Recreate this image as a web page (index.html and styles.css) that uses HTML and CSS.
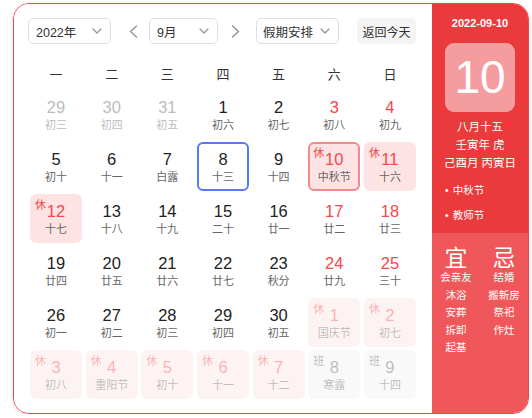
FILE: index.html
```html
<!DOCTYPE html>
<html lang="zh">
<head>
<meta charset="utf-8">
<title>万年历</title>
<link rel="stylesheet" href="styles.css">
</head>
<body>
<div class="cal">
  <div class="main">
    <div class="toolbar">
      <div class="sel-box w-year"><span>2022年</span><svg class="chev" width="10" height="6" viewBox="0 0 10 6"><path d="M1 1L5 5L9 1"/></svg></div>
      <svg class="arrow a-left" width="9" height="13" viewBox="0 0 9 13"><path d="M7.5 1L1.5 6.5L7.5 12"/></svg>
      <div class="sel-box w-month"><span>9月</span><svg class="chev" width="10" height="6" viewBox="0 0 10 6"><path d="M1 1L5 5L9 1"/></svg></div>
      <svg class="arrow a-right" width="9" height="13" viewBox="0 0 9 13"><path d="M1.5 1L7.5 6.5L1.5 12"/></svg>
      <div class="sel-box w-hol"><span>假期安排</span><svg class="chev" width="10" height="6" viewBox="0 0 10 6"><path d="M1 1L5 5L9 1"/></svg></div>
      <div class="btn">返回今天</div>
    </div>
    <div class="weekdays">
      <div>一</div><div>二</div><div>三</div><div>四</div><div>五</div><div>六</div><div>日</div>
    </div>
    <div class="grid">
      <div class="cell prev"><div class="n">29</div><div class="l">初三</div></div>
      <div class="cell prev"><div class="n">30</div><div class="l">初四</div></div>
      <div class="cell prev"><div class="n">31</div><div class="l">初五</div></div>
      <div class="cell"><div class="n">1</div><div class="l">初六</div></div>
      <div class="cell"><div class="n">2</div><div class="l">初七</div></div>
      <div class="cell we"><div class="n">3</div><div class="l">初八</div></div>
      <div class="cell we"><div class="n">4</div><div class="l">初九</div></div>

      <div class="cell"><div class="n">5</div><div class="l">初十</div></div>
      <div class="cell"><div class="n">6</div><div class="l">十一</div></div>
      <div class="cell"><div class="n">7</div><div class="l">白露</div></div>
      <div class="cell selected"><div class="n">8</div><div class="l">十三</div></div>
      <div class="cell"><div class="n">9</div><div class="l">十四</div></div>
      <div class="cell hol today"><span class="badge">休</span><div class="n">10</div><div class="l">中秋节</div></div>
      <div class="cell hol"><span class="badge">休</span><div class="n">11</div><div class="l">十六</div></div>

      <div class="cell hol"><span class="badge">休</span><div class="n">12</div><div class="l">十七</div></div>
      <div class="cell"><div class="n">13</div><div class="l">十八</div></div>
      <div class="cell"><div class="n">14</div><div class="l">十九</div></div>
      <div class="cell"><div class="n">15</div><div class="l">二十</div></div>
      <div class="cell"><div class="n">16</div><div class="l">廿一</div></div>
      <div class="cell we"><div class="n">17</div><div class="l">廿二</div></div>
      <div class="cell we"><div class="n">18</div><div class="l">廿三</div></div>

      <div class="cell"><div class="n">19</div><div class="l">廿四</div></div>
      <div class="cell"><div class="n">20</div><div class="l">廿五</div></div>
      <div class="cell"><div class="n">21</div><div class="l">廿六</div></div>
      <div class="cell"><div class="n">22</div><div class="l">廿七</div></div>
      <div class="cell"><div class="n">23</div><div class="l">秋分</div></div>
      <div class="cell we"><div class="n">24</div><div class="l">廿九</div></div>
      <div class="cell we"><div class="n">25</div><div class="l">三十</div></div>

      <div class="cell"><div class="n">26</div><div class="l">初一</div></div>
      <div class="cell"><div class="n">27</div><div class="l">初二</div></div>
      <div class="cell"><div class="n">28</div><div class="l">初三</div></div>
      <div class="cell"><div class="n">29</div><div class="l">初四</div></div>
      <div class="cell"><div class="n">30</div><div class="l">初五</div></div>
      <div class="cell hol next"><span class="badge">休</span><div class="n">1</div><div class="l">国庆节</div></div>
      <div class="cell hol next"><span class="badge">休</span><div class="n">2</div><div class="l">初七</div></div>

      <div class="cell hol next"><span class="badge">休</span><div class="n">3</div><div class="l">初八</div></div>
      <div class="cell hol next"><span class="badge">休</span><div class="n">4</div><div class="l">重阳节</div></div>
      <div class="cell hol next"><span class="badge">休</span><div class="n">5</div><div class="l">初十</div></div>
      <div class="cell hol next"><span class="badge">休</span><div class="n">6</div><div class="l">十一</div></div>
      <div class="cell hol next"><span class="badge">休</span><div class="n">7</div><div class="l">十二</div></div>
      <div class="cell work next"><span class="badge">班</span><div class="n">8</div><div class="l">寒露</div></div>
      <div class="cell work next"><span class="badge">班</span><div class="n">9</div><div class="l">十四</div></div>
    </div>
  </div>
  <div class="side">
    <div class="side-top">
      <div class="date">2022-09-10</div>
      <div class="bigday">10</div>
      <div class="lunar">
        <div>八月十五</div>
        <div>壬寅年 虎</div>
        <div>己酉月 丙寅日</div>
      </div>
      <ul class="fest">
        <li>中秋节</li>
        <li>教师节</li>
      </ul>
    </div>
    <div class="side-bottom">
      <div class="yj">
        <div class="col">
          <div class="big">宜</div>
          <div class="items"><div>会亲友</div><div>沐浴</div><div>安葬</div><div>拆卸</div><div>起基</div></div>
        </div>
        <div class="col">
          <div class="big">忌</div>
          <div class="items"><div>结婚</div><div>搬新房</div><div>祭祀</div><div>作灶</div></div>
        </div>
      </div>
    </div>
  </div>
</div>
</body>
</html>
```
FILE: styles.css
```css
html, body {
  margin: 0;
  padding: 0;
  background: #fff;
}
body {
  font-family: "Liberation Sans", "Noto Sans CJK SC", sans-serif;
  color: #333;
}
.cal {
  display: flex;
  box-sizing: border-box;
  margin: 3px 0 0 13px;
  width: 516px;
  height: 411px;
  border: 1px solid #f0474a;
  border-radius: 16px;
  overflow: hidden;
  box-shadow: 0 1px 4px rgba(0, 0, 0, 0.12);
}
.main {
  width: 418px;
  flex: none;
  box-sizing: border-box;
  padding: 14px 0 0 14px;
  background: #fff;
}
.toolbar {
  display: flex;
  align-items: center;
  height: 26px;
}
.sel-box {
  box-sizing: border-box;
  height: 26px;
  border: 1px solid #dcdfe6;
  border-radius: 5px;
  display: flex;
  align-items: center;
  justify-content: space-between;
  padding: 0 8px 0 7px;
  font-size: 12.5px;
  color: #333;
}
.w-year { width: 83px; }
.w-month { width: 69px; }
.w-hol { width: 83px; padding-left: 6px; }
.chev path, .arrow path {
  fill: none;
  stroke: #909399;
  stroke-width: 1.2;
  stroke-linecap: round;
  stroke-linejoin: round;
}
.arrow path { stroke-width: 1.4; }
.a-left { margin: 0 11px 0 18px; }
.a-right { margin: 0 16px 0 13px; }
.btn {
  margin-left: 18px;
  width: 59px;
  height: 26px;
  border-radius: 5px;
  background: #f4f4f5;
  font-size: 12px;
  color: #333;
  display: flex;
  align-items: center;
  justify-content: center;
}
.weekdays {
  display: grid;
  grid-template-columns: repeat(7, 52px);
  column-gap: 3.67px;
  margin: 14px 0 0 2px;
  height: 30px;
  align-items: center;
  text-align: center;
  font-size: 13px;
  color: #333;
}
.grid {
  display: grid;
  grid-template-columns: repeat(7, 52px);
  grid-auto-rows: 49px;
  column-gap: 3.67px;
  row-gap: 3px;
  margin: 2px 0 0 2px;
}
.cell {
  position: relative;
  box-sizing: border-box;
  border: 2px solid transparent;
  border-radius: 6px;
  padding-top: 6px;
  text-align: center;
}
.n {
  font-size: 16.5px;
  line-height: 18px;
  color: #222;
}
.l {
  margin-top: 1px;
  font-size: 11px;
  line-height: 16px;
  color: #666;
}
.prev .n, .prev .l { color: #bdbdbd; }
.we .n, .hol .n { color: #f5484a; }
.hol { background: #fde3e3; }
.today { border-color: #f18a8a; }
.selected { border-color: #5b7af2; }
.work { background: #f1f1f1; }
.work .n { color: #666; }
.badge {
  position: absolute;
  left: 3px;
  top: 2px;
  font-size: 11px;
  line-height: 14px;
  color: #f5484a;
}
.work .badge { color: #666; }
.next { opacity: 0.42; }
.side {
  flex: 1;
  display: flex;
  flex-direction: column;
  color: #fff;
}
.side-top {
  height: 229px;
  flex: none;
  background: #ea3a3c;
  padding-top: 11px;
  box-sizing: border-box;
  text-align: center;
}
.date {
  font-size: 11px;
  line-height: 16px;
  font-weight: 700;
}
.bigday {
  margin: 12px auto 0;
  width: 70px;
  height: 69px;
  border-radius: 9px;
  background: rgba(255, 255, 255, 0.5);
  font-size: 46px;
  line-height: 69px;
  color: #fff;
}
.lunar {
  margin-top: 6px;
  font-size: 11.5px;
  line-height: 18px;
}
.fest {
  list-style: none;
  margin: 6px 0 0;
  padding: 0 0 0 13px;
  text-align: left;
  font-size: 10.5px;
  line-height: 25px;
}
.fest li::before {
  content: "•";
  margin-right: 4px;
}
.side-bottom {
  flex: 1;
  background: #f0575a;
  padding-top: 13px;
}
.yj {
  display: flex;
}
.col {
  width: 48px;
  text-align: center;
}
.big {
  font-size: 23px;
  line-height: 24px;
}
.items {
  margin-top: -1px;
  font-size: 10.5px;
  line-height: 17.6px;
}
```
